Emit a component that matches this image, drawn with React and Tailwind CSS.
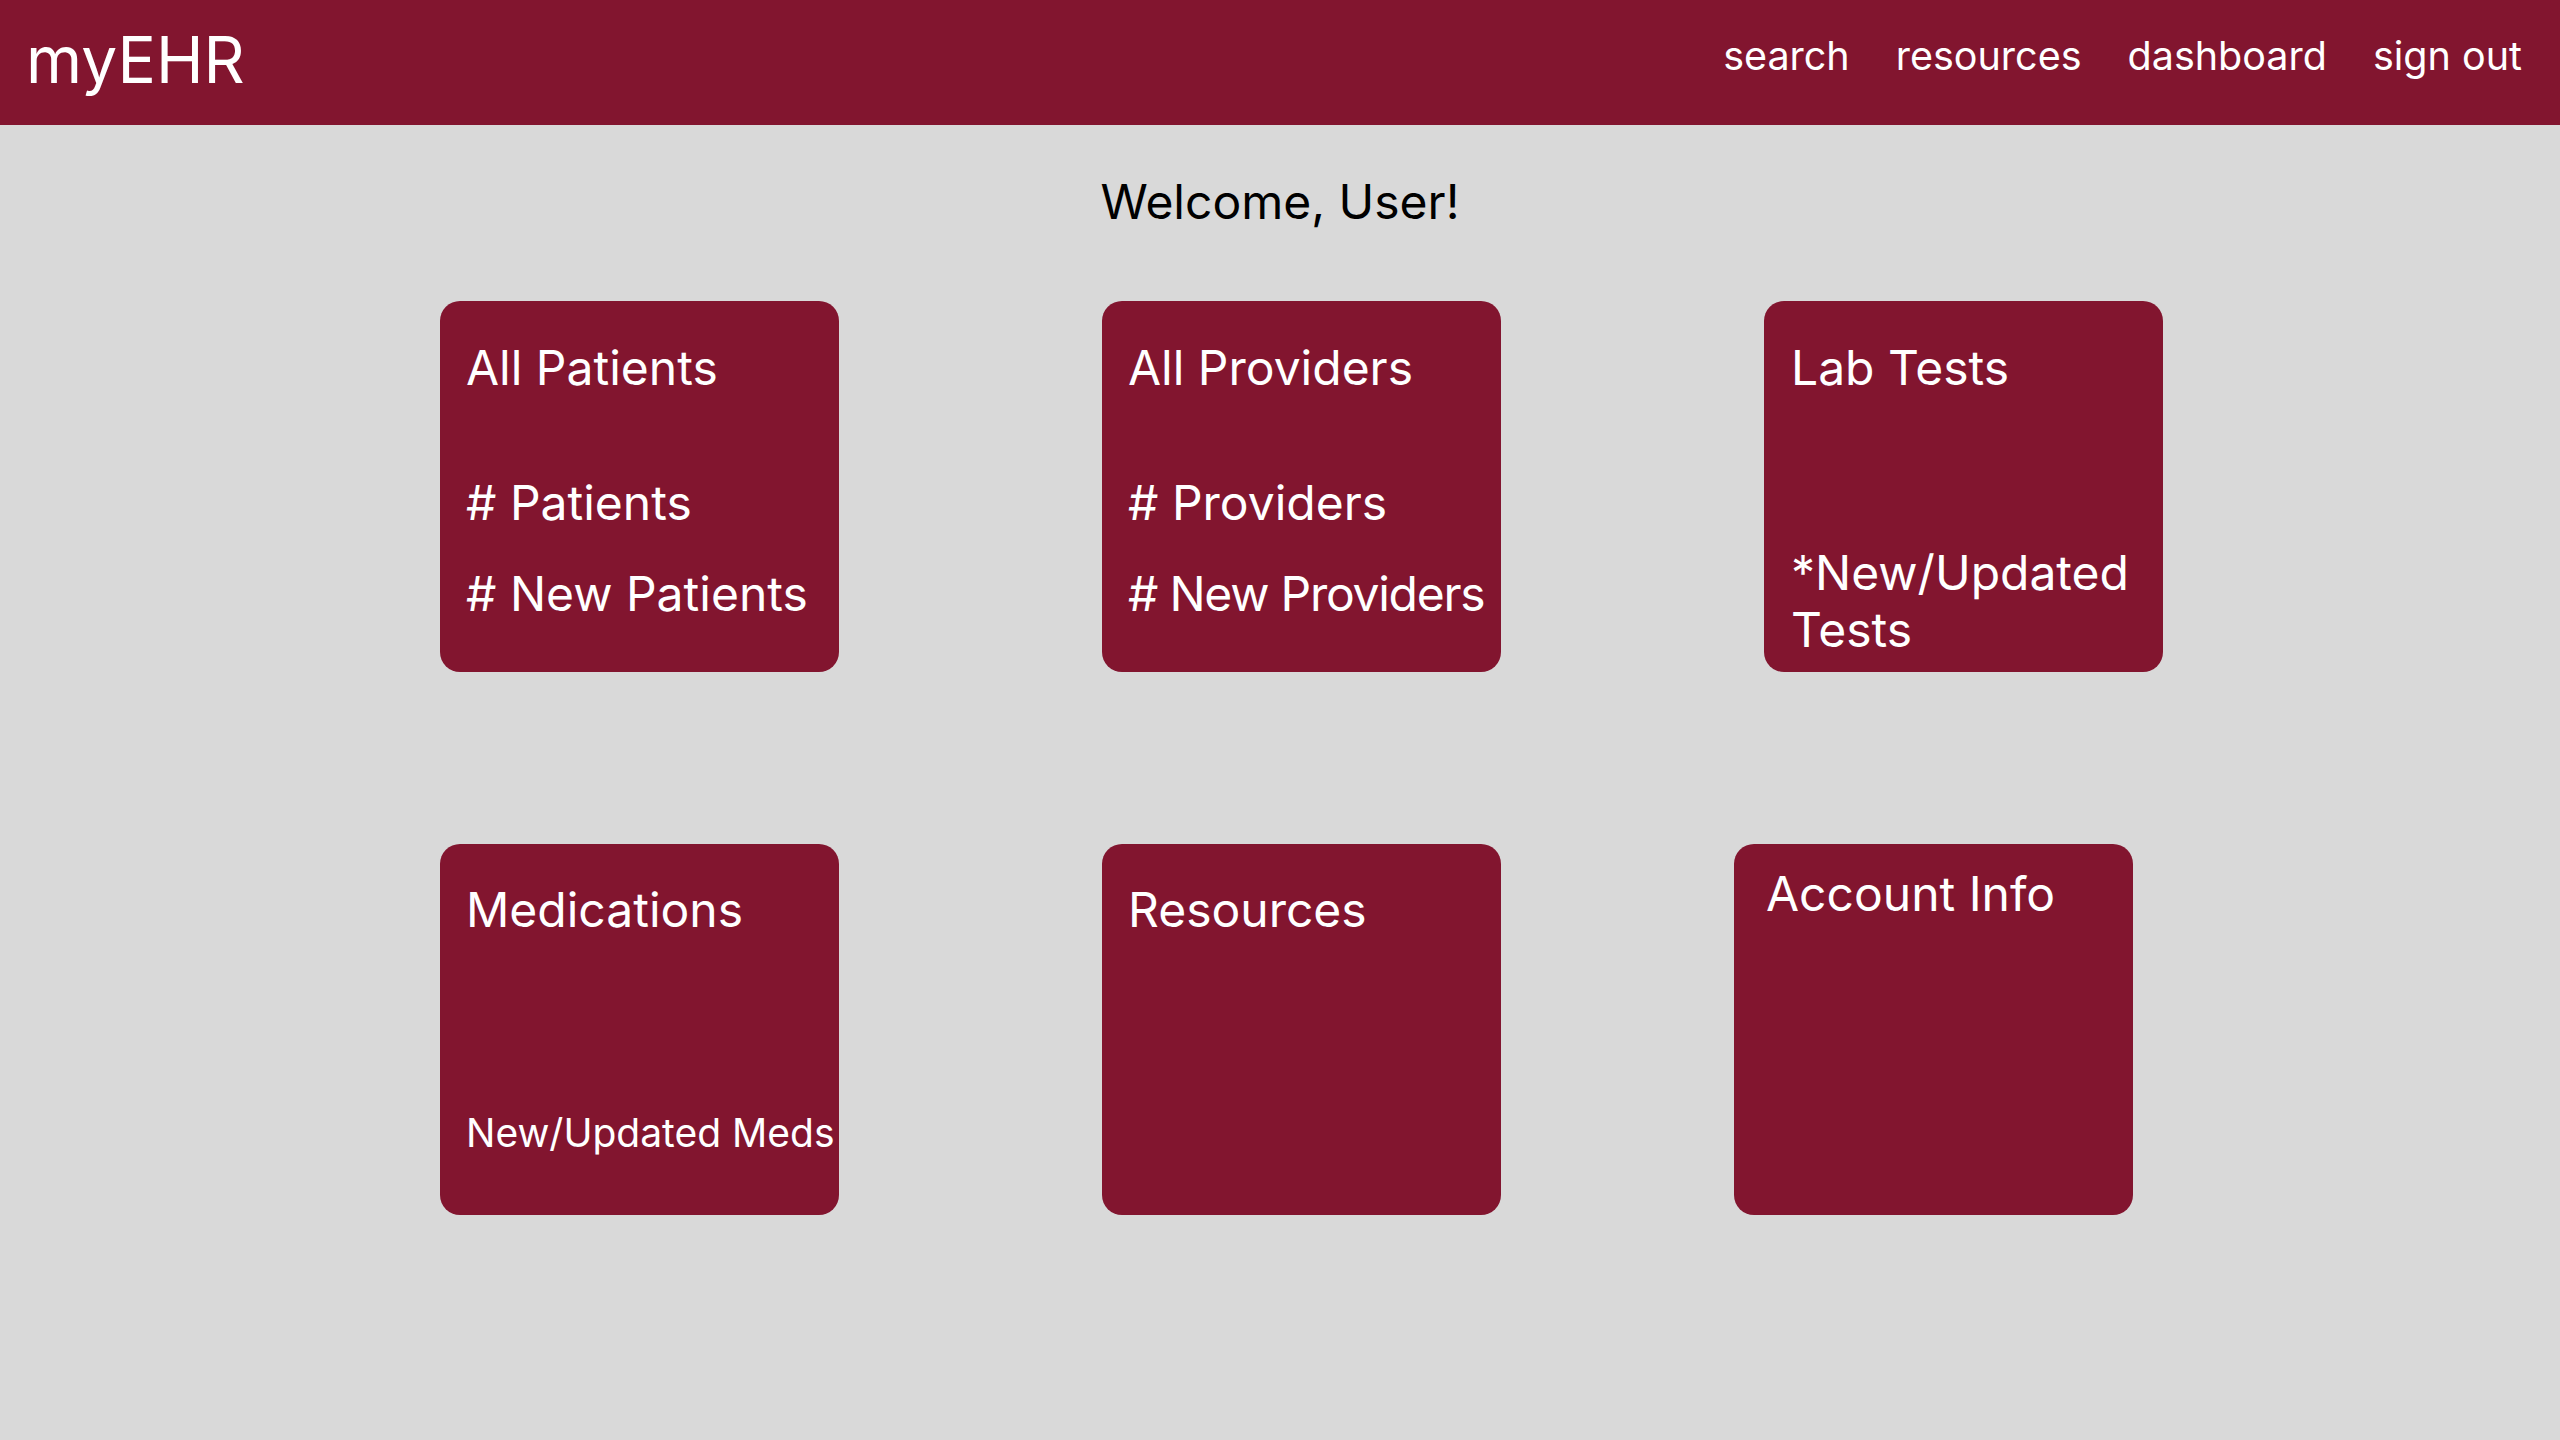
export default function App() {
  const font = { fontFamily: 'Inter, "Liberation Sans", sans-serif' };
  return (
    <div className="min-h-screen w-full bg-[#d9d9d9]" style={font}>
      <header className="flex h-[125px] items-start justify-between bg-[#82152f] text-white">
        <div className="pl-[26px] pt-[28px] text-[64px] leading-none">myEHR</div>
        <nav className="flex gap-[46px] pr-[38px] pt-[37px] text-[39.5px] leading-none">
          <span>search</span>
          <span>resources</span>
          <span>dashboard</span>
          <span>sign out</span>
        </nav>
      </header>
      <div className="mt-[53px] text-center text-[48px] leading-none text-black">Welcome, User!</div>
      <div className="mt-[75px] grid grid-cols-[399px_399px_399px] gap-x-[263px] gap-y-[172px] pl-[440px] text-white">
        <div className="h-[371px] w-[399px] rounded-[20px] bg-[#82152f] pl-[26px] pt-[38px] text-[48px] leading-[1.2] whitespace-nowrap">
          <div>All Patients</div>
          <div className="mt-[77px]"># Patients</div>
          <div className="mt-[34px]"># New Patients</div>
        </div>
        <div className="h-[371px] w-[399px] rounded-[20px] bg-[#82152f] pl-[26px] pt-[38px] text-[48px] leading-[1.2] whitespace-nowrap">
          <div>All Providers</div>
          <div className="mt-[77px]"># Providers</div>
          <div className="mt-[34px] tracking-[-0.026em]"># New Providers</div>
        </div>
        <div className="h-[371px] w-[399px] rounded-[20px] bg-[#82152f] pl-[27px] pr-[16px] pt-[38px] text-[48px] leading-[1.2]">
          <div>Lab Tests</div>
          <div className="mt-[147px]">*New/Updated Tests</div>
        </div>
        <div className="h-[371px] w-[399px] rounded-[20px] bg-[#82152f] pl-[26px] pt-[37px] text-[48px] leading-[1.2]">
          <div>Medications</div>
          <div className="mt-[171px] whitespace-nowrap text-[39px] leading-[1.2]">New/Updated Meds</div>
        </div>
        <div className="h-[371px] w-[399px] rounded-[20px] bg-[#82152f] pl-[26px] pt-[37px] text-[48px] leading-[1.2]">
          <div>Resources</div>
        </div>
        <div className="ml-[-30px] h-[371px] w-[399px] rounded-[20px] bg-[#82152f] pl-[32px] pt-[21px] text-[48px] leading-[1.2]">
          <div>Account Info</div>
        </div>
      </div>
    </div>
  );
}
